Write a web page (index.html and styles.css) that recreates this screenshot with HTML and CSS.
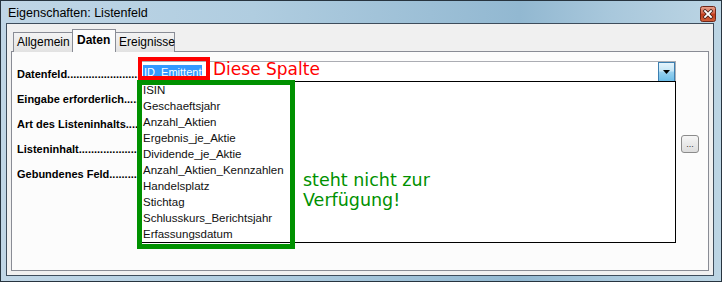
FILE: index.html
```html
<!DOCTYPE html>
<html lang="de">
<head>
<meta charset="utf-8">
<title>Eigenschaften: Listenfeld</title>
<link rel="stylesheet" href="styles.css">
</head>
<body>
<div class="window">
  <div class="titlebar">
    <span class="title">Eigenschaften: Listenfeld</span>
    <div class="close">
      <svg width="16" height="16" viewBox="0 0 16 16">
        <defs>
          <linearGradient id="cg" x1="0" y1="0" x2="0" y2="1">
            <stop offset="0" stop-color="#e7a48f"/>
            <stop offset="0.45" stop-color="#d4654a"/>
            <stop offset="0.5" stop-color="#c13c1c"/>
            <stop offset="1" stop-color="#d0603a"/>
          </linearGradient>
        </defs>
        <rect x="0.5" y="0.5" width="15" height="15" rx="2" fill="url(#cg)" stroke="#6e2618"/>
        <path d="M5 5 L11 11 M11 5 L5 11" stroke="#3a1a14" stroke-width="3.2" stroke-linecap="square"/>
        <path d="M5 5 L11 11 M11 5 L5 11" stroke="#ffffff" stroke-width="1.8" stroke-linecap="square"/>
      </svg>
    </div>
  </div>
  <div class="client">
    <div class="tabs">
      <div class="tab tab-allg">Allgemein</div>
      <div class="tab tab-active">Daten</div>
      <div class="tab tab-ereig">Ereignisse</div>
    </div>
    <div class="panel">
      <div class="form">
        <div class="label">Datenfeld..............................................</div>
        <div class="combo">
          <span class="combo-text"><span class="sel">ID_Emittent</span></span>
          <span class="combo-btn">
            <svg width="7" height="4" viewBox="0 0 7 4"><path d="M0 0 H7 L3.5 4 Z" fill="#000"/></svg>
          </span>
        </div>
        <div></div>

        <div class="label">Eingabe erforderlich..............................</div>
        <div></div>
        <div></div>

        <div class="label">Art des Listeninhalts..............................</div>
        <div></div>
        <div></div>

        <div class="label">Listeninhalt..............................................</div>
        <div></div>
        <div class="dots-btn">...</div>

        <div class="label">Gebundenes Feld..............................................</div>
        <div></div>
        <div></div>
      </div>

      <ul class="droplist">
        <li>ISIN</li>
        <li>Geschaeftsjahr</li>
        <li>Anzahl_Aktien</li>
        <li>Ergebnis_je_Aktie</li>
        <li>Dividende_je_Aktie</li>
        <li>Anzahl_Aktien_Kennzahlen</li>
        <li>Handelsplatz</li>
        <li>Stichtag</li>
        <li>Schlusskurs_Berichtsjahr</li>
        <li>Erfassungsdatum</li>
      </ul>

      <div class="mark-red"></div>
      <div class="mark-green"></div>
      <div class="note-red">Diese Spalte</div>
      <div class="note-green">steht nicht zur<br>Verfügung!</div>
    </div>
  </div>
</div>
</body>
</html>
```

FILE: styles.css
```css
* { box-sizing: border-box; }

html, body {
  margin: 0;
  padding: 0;
  width: 722px;
  height: 282px;
  overflow: hidden;
}

.window {
  width: 722px;
  height: 282px;
  border: 1px solid #27343f;
  background: linear-gradient(90deg, #c0d6e6 0%, #b0cde0 35%, #92b8d1 72%, #a9c8dc 85%, #bcd5e4 100%);
  display: flex;
  flex-direction: column;
  padding: 0 7px 5px 5px;
  font-family: "Liberation Sans", Arial, sans-serif;
}

.titlebar {
  height: 22px;
  display: flex;
  align-items: center;
  justify-content: space-between;
  padding: 0 0 0 2px;
  flex: none;
}

.title {
  font-size: 12.5px;
  color: #000;
  position: relative;
  top: 1px;
}

.close {
  width: 16px;
  height: 16px;
  margin-right: -2px;
  position: relative;
  top: 2px;
}
.close svg { display: block; }

.client {
  flex: 1;
  border: 1px solid #3e4d5c;
  background: #f0f0f0;
  padding: 0 4px 4px 4px;
  display: flex;
  flex-direction: column;
}

.tabs {
  display: flex;
  align-items: flex-end;
  padding: 5px 0 0 2px;
  margin-bottom: -1px;
  position: relative;
  z-index: 2;
  flex: none;
}

.tab {
  height: 20px;
  border: 1px solid #898c95;
  border-bottom: none;
  background: linear-gradient(#f3f3f3, #e2e2e2);
  font-size: 12px;
  line-height: 19px;
  padding-left: 3px;
  color: #000;
}
.tab-allg { width: 60px; }
.tab-ereig { width: 60px; margin-left: -1px; }
.tab-active {
  width: 44px;
  height: 23px;
  background: #fcfcfc;
  font-weight: bold;
  margin-left: -1px;
  padding-left: 4px;
  line-height: 21px;
  position: relative;
  z-index: 3;
}

.panel {
  flex: 1;
  position: relative;
  border: 1px solid #898c95;
  background: #fcfcfc;
  padding: 7px 8px 0 5px;
}

.form {
  display: grid;
  grid-template-columns: 118px 536px 18px;
  grid-auto-rows: 25px;
  column-gap: 5px;
  align-items: center;
}

.label {
  font-size: 11px;
  font-weight: bold;
  color: #000;
  white-space: nowrap;
  overflow: hidden;
  margin-right: -5px;
  position: relative;
  top: 2px;
}

.combo {
  height: 22px;
  border: 1px solid #abadb3;
  background: #fff;
  display: flex;
  align-items: center;
  justify-content: space-between;
  padding: 0 0 0 2px;
  position: relative;
  z-index: 1;
}

.combo-text {
  font-size: 11px;
}
.sel {
  background: #3399ff;
  color: #fff;
  display: inline-block;
  line-height: 14px;
  padding: 0 1px;
}

.combo-btn {
  width: 17px;
  height: 20px;
  border: 1px solid #3c7fb1;
  background: linear-gradient(#e5f4fc 0%, #c4e5f6 45%, #98d1ef 50%, #6cbde8 100%);
  display: flex;
  align-items: center;
  justify-content: center;
}
.combo-btn svg { display: block; margin-top: 1px; }

.dots-btn {
  width: 18px;
  height: 18px;
  border: 1px solid #8b8b8b;
  border-radius: 3px;
  background: linear-gradient(#f6f6f6, #dddddd);
  font-size: 9px;
  line-height: 16px;
  text-align: center;
  color: #333;
  position: relative;
  top: -3px;
}

.droplist {
  position: absolute;
  left: 125px;
  top: 29px;
  width: 539px;
  height: 162px;
  margin: 0;
  padding: 0;
  list-style: none;
  background: #fff;
  border: 1px solid #000;
  z-index: 5;
}
.droplist li {
  font-size: 11.5px;
  line-height: 16px;
  height: 16px;
  padding-left: 5px;
  color: #111;
  white-space: nowrap;
}

.mark-red {
  position: absolute;
  left: 126px;
  top: 5px;
  width: 72px;
  height: 23px;
  border: 4px solid #ff0000;
  z-index: 6;
}

.mark-green {
  position: absolute;
  left: 125px;
  top: 28px;
  width: 158px;
  height: 169px;
  border: 5px solid #009100;
  z-index: 6;
}

.note-red {
  position: absolute;
  left: 201px;
  top: 7px;
  font-family: "DejaVu Sans", Verdana, sans-serif;
  font-size: 17px;
  line-height: 20px;
  color: #ff0000;
  z-index: 6;
}

.note-green {
  position: absolute;
  left: 291px;
  top: 118px;
  font-family: "DejaVu Sans", Verdana, sans-serif;
  font-size: 17.5px;
  line-height: 20px;
  color: #009100;
  z-index: 6;
}
```
